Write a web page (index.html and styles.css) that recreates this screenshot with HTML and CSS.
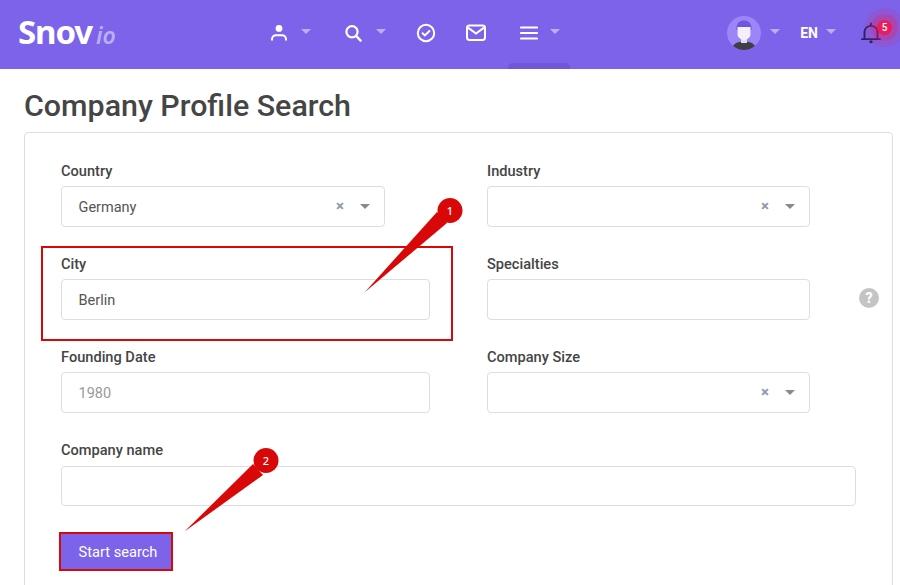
FILE: index.html
```html
<!DOCTYPE html>
<html lang="en">
<head>
<meta charset="utf-8">
<title>Company Profile Search</title>
<link rel="stylesheet" href="styles.css">
</head>
<body>
<header class="topbar">
  <div class="logo"><span class="logo-main">Snov</span><span class="logo-io">io</span></div>
  <nav class="nav">
    <span class="nav-item item-user">
      <svg class="icon" viewBox="0 0 18 18" width="18" height="18"><circle cx="9" cy="4.400" r="3.400" fill="#fff"/><path d="M2 15.800v-.6c0-2.600 2-4 4-4h6c2 0 4 1.400 4 4v.6" fill="none" stroke="#fff" stroke-width="2" stroke-linecap="round"/></svg>
      <i class="caret"></i>
    </span>
    <span class="nav-item item-search">
      <svg class="icon" viewBox="0 0 18 18" width="18" height="18"><circle cx="7" cy="7.800" r="5.600" fill="none" stroke="#fff" stroke-width="2.200"/><path d="M11.200 12l4.400 4.600" stroke="#fff" stroke-width="2.400" stroke-linecap="round"/></svg>
      <i class="caret"></i>
    </span>
    <span class="nav-item item-check">
      <svg class="icon" viewBox="0 0 20 20" width="20" height="20"><circle cx="10" cy="10" r="8.200" fill="none" stroke="#fff" stroke-width="2"/><path d="M6.600 10.200l2.400 2.200 4.400-4.400" fill="none" stroke="#fff" stroke-width="2" stroke-linecap="round" stroke-linejoin="round"/></svg>
    </span>
    <span class="nav-item item-mail">
      <svg class="icon" viewBox="0 0 20 18" width="20" height="18"><rect x="1" y="1.500" width="18" height="14.500" rx="2.400" fill="none" stroke="#fff" stroke-width="2"/><path d="M2 3.600l8 6 8-6" fill="none" stroke="#fff" stroke-width="2"/></svg>
    </span>
    <span class="nav-item item-menu">
      <svg class="icon" viewBox="0 0 18 16" width="18" height="16"><path d="M1 2.500h16M1 8h16M1 13.500h16" stroke="#fff" stroke-width="2.200" stroke-linecap="round"/></svg>
      <i class="caret"></i>
    </span>
  </nav>
  <div class="tools">
    <span class="avatar-wrap">
      <svg class="avatar" viewBox="0 0 34 34" width="34" height="34">
        <defs><clipPath id="av"><circle cx="17" cy="17" r="17"/></clipPath></defs>
        <g clip-path="url(#av)">
          <rect width="34" height="34" fill="#9b85f8"/>
          <path d="M5 34c0-6 5-8.500 12-8.500s12 2.500 12 8.500z" fill="#3f3f46"/>
          <rect x="14" y="21" width="6" height="6" fill="#e3def5"/>
          <path d="M9.500 14c-.5-7 3-9.500 7.500-9.500s8 2.500 7.500 9.500z" fill="#6e55dc"/>
          <path d="M10.500 11c3 0 9.500 0 13 0v7c0 3.500-3.500 6-6.500 6s-6.500-2.500-6.500-6z" fill="#f2eefc"/>
        </g>
      </svg>
      <i class="caret"></i>
    </span>
    <span class="lang">EN<i class="caret"></i></span>
    <span class="bell">
      <svg viewBox="0 0 20 24" width="20" height="22" preserveAspectRatio="none"><path d="M3.500 18.500v-8c0-3.500 2.800-6.300 6.500-6.300s6.500 2.800 6.500 6.300v8M1 18.800h18M10 1.500v2.500" fill="none" stroke="#2b2266" stroke-width="1.900" stroke-linecap="round"/><circle cx="10" cy="21.500" r="1.700" fill="#2b2266"/></svg>
      <span class="badge">5</span>
    </span>
  </div>
  <span class="tab-hint"></span>
</header>

<main class="content">
  <h1 class="title">Company Profile Search</h1>
  <section class="card">
    <form class="form">
      <div class="field">
        <label class="label">Country</label>
        <div class="box select narrow"><span class="value">Germany</span><span class="clear">×</span><i class="arrow"></i></div>
      </div>
      <div class="field">
        <label class="label">Industry</label>
        <div class="box select"><span class="value"></span><span class="clear">×</span><i class="arrow"></i></div>
      </div>
      <div class="side"></div>

      <div class="field">
        <label class="label">City</label>
        <div class="box"><span class="value">Berlin</span></div>
      </div>
      <div class="field">
        <label class="label">Specialties</label>
        <div class="box"></div>
      </div>
      <div class="side"><span class="help">?</span></div>

      <div class="field">
        <label class="label">Founding Date</label>
        <div class="box"><span class="value muted">1980</span></div>
      </div>
      <div class="field">
        <label class="label">Company Size</label>
        <div class="box select"><span class="value"></span><span class="clear">×</span><i class="arrow"></i></div>
      </div>
      <div class="side"></div>

      <div class="field wide">
        <label class="label">Company name</label>
        <div class="box short"></div>
      </div>
    </form>
    <button class="submit" type="button">Start search</button>
  </section>
</main>

<div class="mark mark-city"></div>
<svg class="pointers" viewBox="0 0 900 585" width="900" height="585">
  <path d="M364.500 292.500L437 212 L447 223z" fill="#d90808"/>
  <circle cx="450" cy="210.500" r="12.500" fill="#d90808"/>
  <path d="M184.500 531.500L253 464 L263 475z" fill="#d90808"/>
  <circle cx="266" cy="460.500" r="12.500" fill="#d90808"/>
</svg>
<span class="num num-1">1</span>
<span class="num num-2">2</span>
</body>
</html>
```

FILE: styles.css
```css
* { box-sizing: border-box; }
html, body { margin: 0; height: 585px; overflow: hidden; background: #fff; }
body { font-family: Roboto, "Liberation Sans", sans-serif; color: #454545; position: relative; }

.topbar { position: relative; height: 69px; padding-bottom: 3px; background: #7d63ea; display: flex; align-items: center; }
.logo { width: 270px; padding-left: 18px; margin-bottom: 3px; line-height: 1; flex: none; color: #fff; }
.logo-main { font-family: "Noto Sans", "Open Sans", sans-serif; font-weight: 700; font-size: 33px; letter-spacing: -1.100px; }
.logo-io { font-family: "Noto Sans", sans-serif; font-style: italic; font-weight: 600; font-size: 23px; color: #bcaef5; margin-left: 4px; }

.nav { display: flex; align-items: center; flex: none; }
.nav-item { display: flex; align-items: center; height: 24px; }
.item-user { width: 75px; }
.item-search { width: 71px; }
.item-check { width: 50px; }
.item-mail { width: 54px; }
.item-menu { width: 60px; }
.icon { display: block; flex: none; }
.caret { display: inline-block; width: 0; height: 0; border-left: 5px solid transparent; border-right: 5px solid transparent; border-top: 5px solid #bbaef3; margin-left: 13px; margin-bottom: 3px; flex: none; }
.item-menu .caret { margin-left: 12px; }

.tools { margin-left: auto; display: flex; align-items: center; padding-right: 19px; }
.avatar-wrap { display: flex; align-items: center; }
.avatar { display: block; }
.avatar-wrap .caret { margin-left: 9px; }
.lang { display: flex; align-items: center; margin-left: 20px; font-size: 14px; font-weight: 700; color: #fff; }
.lang .caret { margin-left: 8px; }
.bell { position: relative; display: block; margin-left: 25px; width: 20px; height: 22px; }
.bell svg { display: block; }
.badge { position: absolute; left: 16px; top: -2.500px; width: 15px; height: 15px; border-radius: 50%; background: #ee1b5c; color: #fff; font-size: 10px; font-weight: 500; line-height: 15px; text-align: center; box-shadow: 0 0 0 6px rgba(238, 27, 92, .3), 0 0 0 12px rgba(238, 27, 92, .13); }
.tab-hint { position: absolute; left: 508px; bottom: 0; width: 62px; height: 6px; background: #7056d8; border-radius: 5px 5px 0 0; }

.content { padding: 0 7px 0 24px; }
.title { margin: 0; padding-top: 20px; height: 63px; font-size: 30.400px; line-height: 34px; font-weight: 500; color: #454545; }
.card { border: 1px solid #dedede; border-radius: 4px; padding: 26px 36px 0; height: 480px; }
.form { display: grid; grid-template-columns: 426px 323px 46px; row-gap: 25px; }
.field { display: flex; flex-direction: column; }
.wide { grid-column: 1 / -1; }
.label { font-size: 14.600px; line-height: 24px; font-weight: 500; color: #454545; margin-bottom: 3px; }
.box { width: 369px; height: 41px; border: 1px solid #dcdcec; border-radius: 4px; display: flex; align-items: center; padding: 1px 17px 0 16.500px; background: #fff; font-size: 14.500px; color: #555; }
.field:nth-child(3n+2) .box { width: 323px; }
.box.narrow { width: 324px; }
.wide .box { width: 795px; height: 40px; }
.wide .label { margin-bottom: 4px; }
.value { flex: 1; }
.muted { color: #9a9a9a; }
.clear { font-size: 15px; line-height: 1; color: #8d99a8; font-weight: 700; margin-right: 15px; margin-bottom: 2px; }
.arrow { width: 0; height: 0; border-left: 5px solid transparent; border-right: 5px solid transparent; border-top: 5px solid #8a8a8a; margin-right: -3px; margin-left: 1px; margin-bottom: 2px; }
.side { display: flex; align-items: flex-end; justify-content: flex-end; padding-bottom: 12px; }
.help { width: 20px; height: 20px; border-radius: 50%; background: #c4c4c4; color: #fff; font-size: 14px; font-weight: 900; line-height: 20px; text-align: center; margin-right: -23px; }

.submit { display: block; margin: 26px 0 0 -2px; width: 114px; height: 39px; padding: 0 0 0 4px; border: 2px solid #d90808; background: #7d63ea; color: #fff; font-family: Roboto, sans-serif; font-size: 14.600px; }

.mark { position: absolute; }
.mark-city { left: 41px; top: 246px; width: 412px; height: 95px; border: 2px solid #d90808; }
.pointers { position: absolute; left: 0; top: 0; display: block; pointer-events: none; }
.num { position: absolute; width: 24px; text-align: center; color: #fff; font-size: 11px; font-weight: 500; line-height: 14px; font-family: "Noto Sans", sans-serif; }
.num-1 { left: 438px; top: 204px; }
.num-2 { left: 254px; top: 454px; }
```
